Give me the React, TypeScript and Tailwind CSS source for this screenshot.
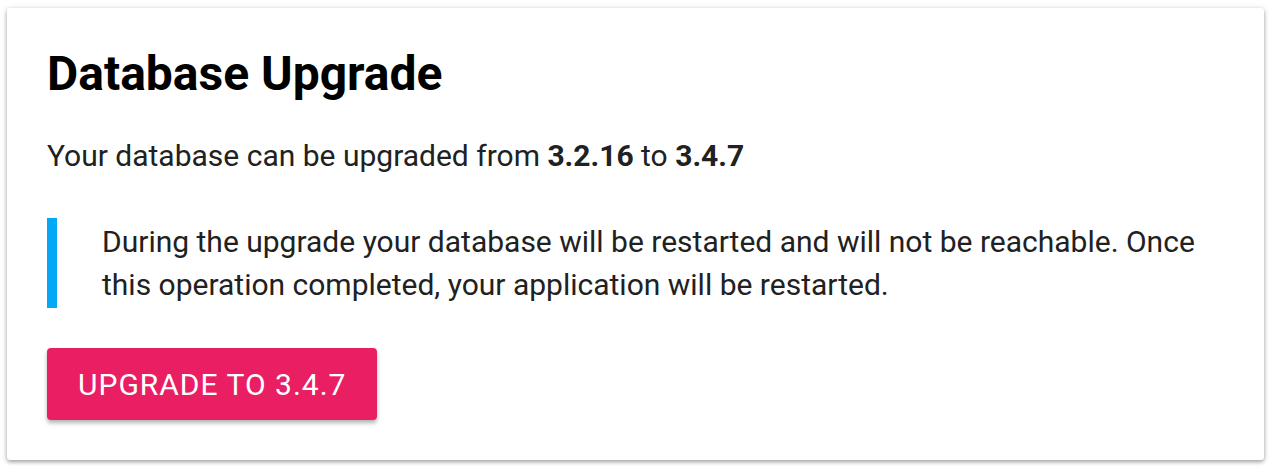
import React from 'react'

const App = () => {
  return (
    <div className="min-h-[472px] w-full bg-white pt-2 pl-[7px] pr-[10px] font-['Roboto',sans-serif]">
      <div className="rounded-[3px] bg-white px-10 pt-[38px] pb-10 shadow-[0_2px_4px_rgba(0,0,0,0.35),0_0_6px_rgba(0,0,0,0.08)]">
        <h1 className="text-[48px] font-bold leading-[56px] text-black">Database Upgrade</h1>
        <p className="mt-[32px] text-[30px] leading-[43px] text-[#212121]">
          Your database can be upgraded from <strong className="font-bold">3.2.16</strong> to{' '}
          <strong className="font-bold">3.4.7</strong>
        </p>
        <blockquote className="mt-[41px] border-l-[10px] border-[#03a9f4] py-[2px] pl-[45px] text-[30px] leading-[43px] text-[#212121]">
          During the upgrade your database will be restarted and will not be reachable. Once this operation
          completed, your application will be restarted.
        </blockquote>
        <button className="mt-10 h-[72px] rounded-[4px] bg-[#e91e63] px-[31px] text-[30px] uppercase tracking-[1px] text-white shadow-[0_3px_4px_rgba(0,0,0,0.3)]">
          Upgrade to 3.4.7
        </button>
      </div>
    </div>
  )
}

export default App
